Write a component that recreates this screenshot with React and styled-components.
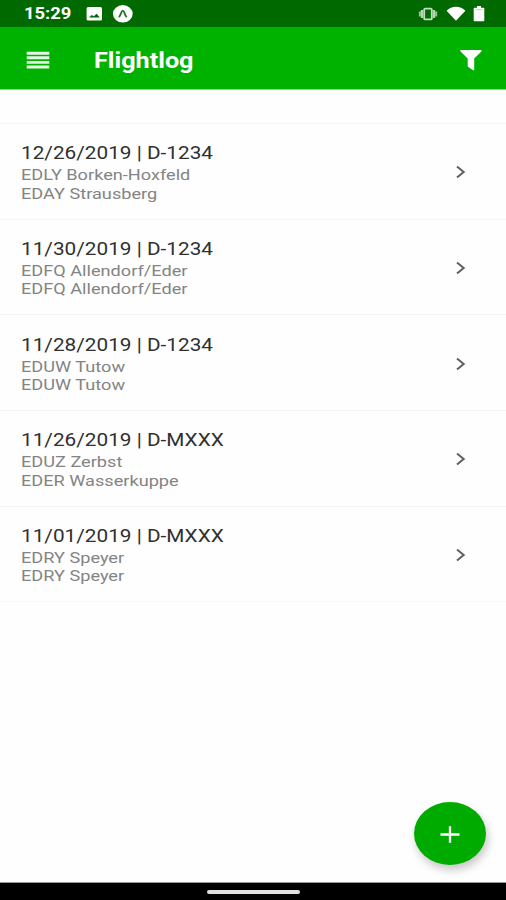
import React from 'react';
import styled, { createGlobalStyle } from 'styled-components';

const GlobalStyle = createGlobalStyle`
  body {
    margin: 0;
    background: #fefefe;
    font-family: Roboto, 'Liberation Sans', sans-serif;
  }

  svg {
    display: block;
    flex: none;
  }
`;

const Screen = styled.div`
  height: 900px;
  display: flex;
  flex-direction: column;
  position: relative;
  overflow: hidden;
`;

const StatusBar = styled.div`
  height: 27px;
  flex: none;
  display: flex;
  align-items: center;
  justify-content: space-between;
  padding: 0 21px 0 24px;
  background: #006a00;
  color: #fff;
`;

const StatusGroup = styled.div`
  display: flex;
  align-items: center;
  gap: ${({ gap }) => gap};
`;

const Clock = styled.span`
  width: 52px;
  font-size: 17px;
  font-weight: 700;
  line-height: 27px;
  white-space: nowrap;
  transform: scaleX(1.08);
  transform-origin: left;
`;

const Header = styled.header`
  height: 63px;
  flex: none;
  display: flex;
  align-items: center;
  padding: 4px 23px 0 26px;
  box-sizing: border-box;
  border-bottom: 1px solid #8cd68c;
  background: #00b200;
  color: #fff;
`;

const Title = styled.h1`
  margin: 0 auto 0 43.5px;
  font-size: 22.5px;
  font-weight: 700;
  line-height: 30px;
  transform: scaleX(1.12);
  transform-origin: left;
`;

const List = styled.ul`
  list-style: none;
  margin: 33px 0 0;
  padding: 0;
  border-top: 1px solid #f5f5f5;
`;

const Row = styled.li`
  height: 95.65px;
  box-sizing: border-box;
  display: flex;
  align-items: center;
  justify-content: space-between;
  padding: 2px 38px 0 21px;
  border-bottom: 1px solid #f5f5f5;

  &:last-child {
    border-bottom-color: #fafafa;
  }
`;

const Entry = styled.div`
  white-space: nowrap;
  transform: scaleX(1.187);
  transform-origin: left;
`;

const Heading = styled.div`
  font-size: 17.5px;
  line-height: 25px;
  color: #303030;
`;

const Airport = styled.div`
  font-size: 15.3px;
  line-height: 18.6px;
  color: #848484;
`;

const AddButton = styled.button`
  position: absolute;
  left: 414px;
  top: 802px;
  width: 72px;
  height: 63px;
  padding: 0;
  border: 0;
  border-radius: 50%;
  display: flex;
  align-items: center;
  justify-content: center;
  background: #00ab00;
  box-shadow: 2px 5px 9px rgba(0, 0, 0, 0.22);
`;

const NavBar = styled.div`
  height: 17px;
  flex: none;
  display: flex;
  justify-content: center;
  margin-top: auto;
  border-top: 1px solid #999;
  background: #000;
`;

const HomePill = styled.div`
  width: 93px;
  height: 4px;
  margin-top: 7px;
  border-radius: 2px;
  background: #e0e0e0;
`;

const flights = [
  { date: '12/26/2019', plane: 'D-1234', from: 'EDLY Borken-Hoxfeld', to: 'EDAY Strausberg' },
  { date: '11/30/2019', plane: 'D-1234', from: 'EDFQ Allendorf/Eder', to: 'EDFQ Allendorf/Eder' },
  { date: '11/28/2019', plane: 'D-1234', from: 'EDUW Tutow', to: 'EDUW Tutow' },
  { date: '11/26/2019', plane: 'D-MXXX', from: 'EDUZ Zerbst', to: 'EDER Wasserkuppe' },
  { date: '11/01/2019', plane: 'D-MXXX', from: 'EDRY Speyer', to: 'EDRY Speyer' },
];

const PictureIcon = () => (
  <svg width="17" height="15" viewBox="0 0 17 15">
    <rect x="0.6" y="1" width="15.4" height="13.6" rx="1.5" fill="#fff" />
    <path d="M3 11.6L5.8 9l2 1.3 2.8-2.6 3.2 3.9z" fill="#006a00" />
  </svg>
);

const ExpoIcon = () => (
  <svg width="21" height="19" viewBox="0 0 21 19">
    <ellipse cx="10.8" cy="9.8" rx="9.9" ry="8.7" fill="#fff" />
    <path
      d="M7.3 12.6C8.800 11 9.500 6.600 10.800 6.600s2 4.400 3.500 6"
      fill="none"
      stroke="#2c752c"
      strokeWidth="1.9"
      strokeLinecap="round"
    />
  </svg>
);

const VibrateIcon = () => (
  <svg width="20" height="14" viewBox="0 0 20 14">
    <rect x="6.2" y="1.6" width="7.6" height="10.8" rx="1" fill="none" stroke="#c4dcc4" strokeWidth="1.8" />
    <path d="M4 3v8M16 3v8" stroke="#b4d3b4" strokeWidth="2.2" />
    <path d="M1.900 4.600v4.800M18.100 4.600v4.800" stroke="#9cc49c" strokeWidth="2" />
  </svg>
);

const WifiIcon = () => (
  <svg width="20" height="15" viewBox="0 0 20 15">
    <path d="M10 14.7L.6 4.700C5.500-.5 14.500-.5 19.400 4.700z" fill="#fff" />
  </svg>
);

const BatteryIcon = () => (
  <svg width="12" height="17" viewBox="0 0 12 17">
    <path
      d="M1.500 2.700H4V1.100h4v1.600h2.500q.8 0 .8.8v11.900q0 .8-.8.8h-9q-.8 0-.8-.8V3.500q0-.8.8-.8z"
      fill="#fff"
    />
    <path d="M2.500 4.700h7" stroke="#b9d5b9" strokeWidth="1" />
  </svg>
);

const MenuIcon = () => (
  <svg width="24" height="18" viewBox="0 0 24 18">
    <path
      d="M.7 2.200h22.600M.7 6.800h22.600M.7 11.400h22.600M.7 16h22.600"
      stroke="#e4f7e4"
      strokeWidth="2.9"
    />
  </svg>
);

const FilterIcon = () => (
  <svg width="24" height="22" viewBox="0 0 24 22">
    <path
      d="M1.700.9h20.600q.9.500.1 1.500l-7.200 7.200v11.200q-.4.900-1.400.3l-4.500-3q-.6-.4-.6-1V9.600L1.600 2.400Q.8 1.400 1.700.9z"
      fill="#fff"
    />
  </svg>
);

const ChevronIcon = () => (
  <svg width="14" height="14" viewBox="0 0 14 14">
    <path d="M3 1.500L9.700 7 3 12.500" fill="none" stroke="#606060" strokeWidth="2" />
  </svg>
);

const PlusIcon = () => (
  <svg width="20" height="18" viewBox="0 0 20 18">
    <path d="M.5 9.500h19M10 1.200v16.600" stroke="#fff" strokeWidth="2.3" />
  </svg>
);

const App = () => (
  <React.Fragment>
    <GlobalStyle />
    <Screen>
      <StatusBar>
        <StatusGroup gap="9.5px">
          <Clock>15:29</Clock>
          <PictureIcon />
          <ExpoIcon />
        </StatusGroup>
        <StatusGroup gap="7.5px">
          <VibrateIcon />
          <WifiIcon />
          <BatteryIcon />
        </StatusGroup>
      </StatusBar>
      <Header>
        <MenuIcon />
        <Title>Flightlog</Title>
        <FilterIcon />
      </Header>
      <List>
        {flights.map(({ date, plane, from, to }) => (
          <Row key={date}>
            <Entry>
              <Heading>
                {date} | {plane}
              </Heading>
              <Airport>{from}</Airport>
              <Airport>{to}</Airport>
            </Entry>
            <ChevronIcon />
          </Row>
        ))}
      </List>
      <AddButton aria-label="Add flight">
        <PlusIcon />
      </AddButton>
      <NavBar>
        <HomePill />
      </NavBar>
    </Screen>
  </React.Fragment>
);

export default App;
